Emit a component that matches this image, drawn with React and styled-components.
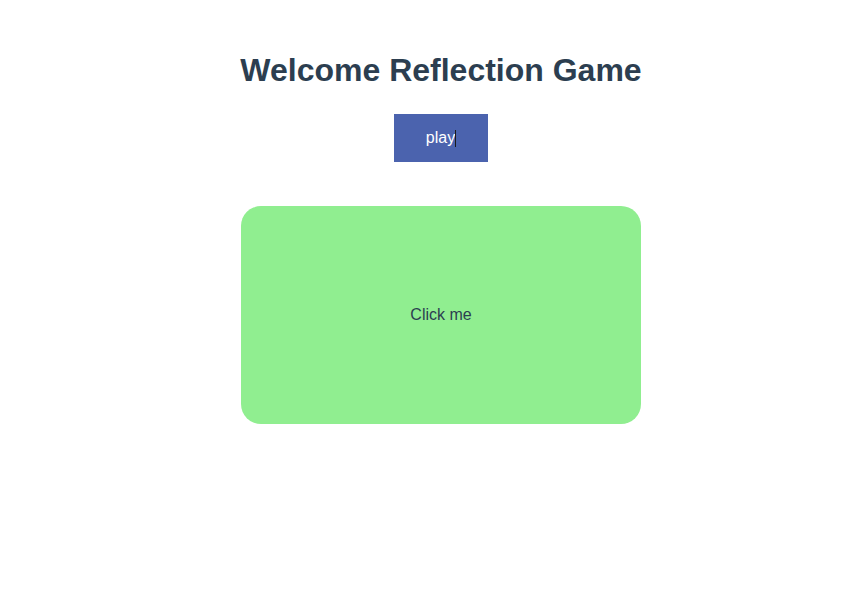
import React, { useState } from 'react'
import styled, { createGlobalStyle } from 'styled-components'

const GlobalStyle = createGlobalStyle`
body {
    margin: 0;
    background: #ffffff;
    font-family: "Liberation Sans", Arial, sans-serif;
}
`

const App = () => {
    const [clicks, setClicks] = useState(0)

    return (
        <Page>
            <GlobalStyle />
            <Title>Welcome Reflection Game</Title>
            <PlayButton>
                play<Caret />
            </PlayButton>
            <ClickBox onClick={() => setClicks(clicks + 1)}>Click me</ClickBox>
        </Page>
    )
}

export default App

const Page = styled.div`
display: flex;
flex-direction: column;
align-items: center;
padding: 52px 0 0 24px;
color: #2c3e50;
`;
const Title = styled.h1`
margin: 0;
font-size: 32px;
line-height: 37px;
font-weight: bold;
color: #2c3e50;
`;
const PlayButton = styled.div`
display: flex;
align-items: center;
justify-content: center;
margin-top: 25px;
width: 94px;
height: 48px;
background: #4b63ae;
color: #ffffff;
font-size: 16px;
`;
const Caret = styled.span`
display: inline-block;
width: 1px;
height: 17px;
background: #1a1a1a;
`;
const ClickBox = styled.div`
display: flex;
align-items: center;
justify-content: center;
margin-top: 44px;
width: 400px;
height: 218px;
border-radius: 20px;
background: #90ee90;
color: #2c3e50;
font-size: 16px;
cursor: pointer;
`;
